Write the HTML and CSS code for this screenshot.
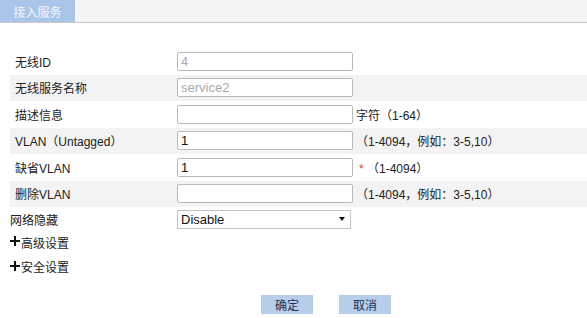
FILE: index.html
```html
<!DOCTYPE html>
<html>
<head>
<meta charset="utf-8">
<link rel="stylesheet" href="styles.css">
</head>
<body>
<div class="tabbar"><div class="tab">接入服务</div></div>
<div class="form">
  <div class="row"><div class="label">无线ID</div><input class="field dis" value="4" disabled></div>
  <div class="row alt"><div class="label">无线服务名称</div><input class="field dis" value="service2" disabled></div>
  <div class="row"><div class="label">描述信息</div><input class="field" value=""><span class="hint">字符（1-64）</span></div>
  <div class="row alt"><div class="label">VLAN（Untagged）</div><input class="field" value="1"><span class="hint">（1-4094，例如：3-5,10）</span></div>
  <div class="row"><div class="label">缺省VLAN</div><input class="field" value="1"><span class="hint"><span class="req">*</span> （1-4094）</span></div>
  <div class="row alt"><div class="label">删除VLAN</div><input class="field" value=""><span class="hint">（1-4094，例如：3-5,10）</span></div>
  <div class="row sel"><div class="label flush">网络隐藏</div><div class="select"><span>Disable</span><span class="arrow"></span></div></div>
  <div class="row expand"><span class="plus"></span>高级设置</div>
  <div class="row expand"><span class="plus"></span>安全设置</div>
  <div class="buttons"><button class="btn">确定</button><button class="btn">取消</button></div>
</div>
</body>
</html>
```
FILE: styles.css
```css
body {
  margin: 0;
  background: #fff;
  font-family: "Liberation Sans", "Noto Sans CJK SC", sans-serif;
  font-size: 12px;
  color: #222;
}
.tabbar {
  height: 22px;
  background: #f4f4f4;
  border-bottom: 1px solid #c9c9c9;
  display: flex;
}
.tab {
  width: 75px;
  background: #a9c5ea;
  color: #f4f7fc;
  display: flex;
  align-items: center;
  justify-content: center;
  font-size: 12px;
}
.form {
  padding-top: 25px;
}
.row {
  margin-left: 10px;
  height: 26.5px;
  display: flex;
  align-items: center;
}
.row.alt {
  background: #f3f3f3;
}
.row.sel {
  height: 22px;
  margin-top: 1px;
}
.label {
  width: 162px;
  padding-left: 5px;
}
.label.flush {
  padding-left: 0;
  width: 167px;
}
.field {
  width: 176px;
  height: 19px;
  box-sizing: border-box;
  border: 1px solid #b9b9b9;
  border-radius: 2px;
  background: #fff;
  padding: 0 3px;
  font-family: "Liberation Sans", "Noto Sans CJK SC", sans-serif;
  font-size: 13px;
  color: #111;
  margin: 0;
}
.field.dis {
  color: #aaa;
  background: #fff;
}
.hint {
  margin-left: 3px;
  font-size: 12px;
  color: #222;
}
.req {
  color: #e04040;
  margin-left: 3px;
}
.select {
  width: 174px;
  height: 19px;
  box-sizing: border-box;
  border: 1px solid #c4c4c4;
  background: #fff;
  display: flex;
  align-items: center;
  justify-content: space-between;
  padding: 0 4px 0 3px;
  font-size: 13px;
  color: #111;
}
.arrow {
  width: 0;
  height: 0;
  border-left: 3.5px solid transparent;
  border-right: 3.5px solid transparent;
  border-top: 4px solid #111;
  margin-right: 1px;
}
.row.expand {
  height: 24.5px;
  font-size: 12px;
}
.plus {
  width: 10px;
  height: 10px;
  margin-right: 1px;
  margin-top: -2px;
  background:
    linear-gradient(#111, #111) center / 10px 2px no-repeat,
    linear-gradient(#111, #111) center / 2px 10px no-repeat;
}
.buttons {
  display: flex;
  gap: 26px;
  margin-left: 261px;
  margin-top: 16px;
}
.btn {
  width: 52px;
  height: 19px;
  border: none;
  background: #b8cdea;
  color: #1b2d50;
  font-family: "Liberation Sans", "Noto Sans CJK SC", sans-serif;
  font-size: 12px;
  padding: 0;
}
```
